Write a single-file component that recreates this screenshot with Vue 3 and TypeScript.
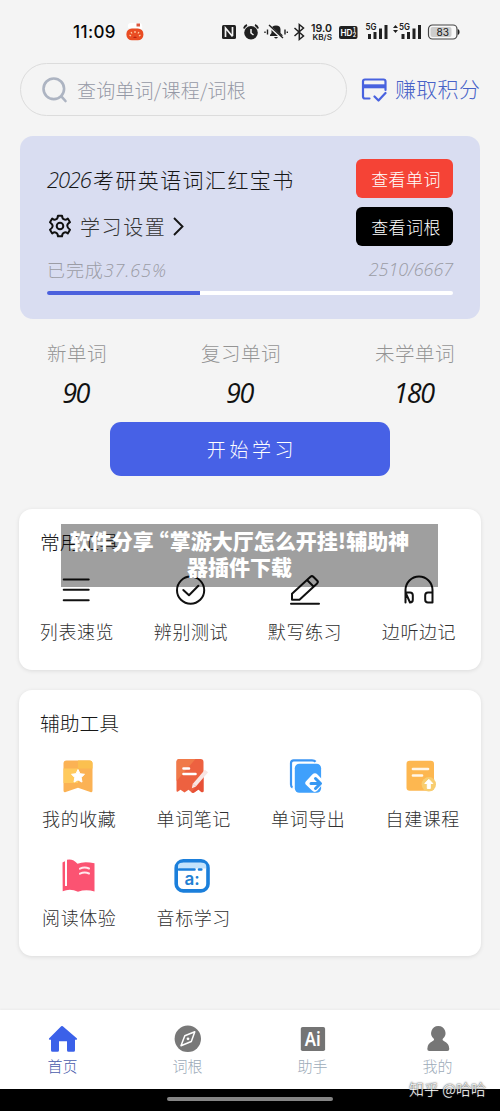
<script setup lang="ts">
interface Item {
  label: string
  icon: string
}

const stats = [
  { label: '新单词', value: '90' },
  { label: '复习单词', value: '90' },
  { label: '未学单词', value: '180' },
]

const progress = 37.65

const common: Item[] = [
  { label: '列表速览', icon: '<path d="M2.7 5.5h25M2.7 15.800h25M2.7 26.300h25" />' },
  { label: '辨别测试', icon: '<circle cx="15.600" cy="16.200" r="13.600"/><path d="m8.300 16 5.700 5.200L23.400 11.700"/>' },
  { label: '默写练习', icon: '<path d="M2 29.800h28M3 25.800v-6L21.500 2.800q1.500-1.300 2.800 0l4 4q1.200 1.300-.2 2.600L10.500 25.800zM18 6l6.300 6.300"/>' },
  { label: '边听边记', icon: '<path d="M2.500 28.500V16a13.500 13.500 0 0 1 27 0v12.500H25q-2.800 0-2.800-2.800v-4.500q0-2.800 2.800-2.800h4.500M2.500 18.400H7q2.800 0 2.800 2.800v4.500q0 2.800-2.800 2.800z"/>' },
]

const helpers: Item[] = [
  {
    label: '我的收藏',
    icon: '<path fill="#fbb254" d="M3.500 4.500q0-3 3-3h23q3 0 3 3v27q0 2.400-2.200 1.400L18 28.800 5.700 33q-2.200.8-2.200-1.400z"/><path fill="#ffca5d" d="M3.500 9.500H18v14.500H3.500z"/><path fill="#fbc04f" d="M18 1.500h11.500q3 0 3 3v5H18z"/><path fill="#fff" stroke="#fff" stroke-linejoin="round" d="m18 10.500 2 4.200 4.500.6-3.300 3.200.8 4.600-4-2.200-4 2.200.8-4.600-3.300-3.200 4.500-.6z"/>',
  },
  {
    label: '单词笔记',
    icon: '<path fill="#ed6140" d="M2.500 3q0-3 3-3h21q3 0 3 3v29.500q-1.500 1.500-3-.2l-2-1.800-4 2.700q-1.500 1-3 0l-3-2.400-4 2.700-4-2.700-2.500 1.700q-1.500.8-1.500-1z"/><path fill="#f07a49" d="M2.500 3q0-3 3-3h16l-19 22z"/><path fill="#e75036" d="M29.500 18v14.500q-1.500 1.500-3-.2l-2-1.800-4 2.700q-1.500 1-3 0z"/><path stroke="#fff" stroke-width="2.600" stroke-linecap="round" d="M9.500 9.500H15M9.500 15h12"/><path stroke="#f8e5e3" stroke-width="4.200" d="M32.500 12 20.500 26"/><path fill="#f8e5e3" d="m18.800 24.500 3.300 2.900-4.300 1.800z"/>',
  },
  {
    label: '单词导出',
    icon: '<path fill="none" stroke="#3b95f3" stroke-width="2.200" d="M3.500 28.500Q2 28 2 25.500V4q0-2.700 2.700-2.700H23q2.500 0 3.600 1.400"/><rect x="5.800" y="4.700" width="26.300" height="29" rx="4.500" fill="#3fa0fc"/><path fill="#fff" d="m16.800 22.500 6.500-7q2.700-2.500 5.200 0l4.800 5v5l-4.800 6q-2.800 2.800-5.500 0l-6-5.700q-1.500-1.600-.2-3.300z"/><path fill="none" stroke="#3698f3" stroke-width="3" stroke-linecap="round" stroke-linejoin="round" d="M22 24.500h9m-4.500-5 5 5-5 5"/>',
  },
  {
    label: '自建课程',
    icon: '<rect x="3.500" y="1.800" width="27.500" height="30" rx="3.200" fill="#fdb750"/><path stroke="#fff6e8" stroke-width="2.700" stroke-linecap="round" d="M10 10h15M10 16.500h9"/><circle cx="25.800" cy="25.300" r="7.200" fill="#f8cd70"/><path fill="#fff" stroke="#fff" stroke-linejoin="round" d="m25.800 20.300 4 4.200h-2.500v5h-3v-5h-2.500z"/>',
  },
  {
    label: '阅读体验',
    icon: '<path fill="#fb5372" d="M2.500 3.500q1.500-1 2.500-1.200V27h2V.8Q13-.5 17.500 4.800 24 1.800 34.500 4.300V32.500q-8.500-2.500-16.500.2-8-3.700-15.300-.4z"/><path stroke="#ffe7ec" fill="none" stroke-width="2" stroke-linecap="round" d="M20 9.700q4.500-2.200 9-.2M20 14.700q4.500-2.200 9-.2"/>',
  },
  {
    label: '音标学习',
    icon: '<rect x="2.200" y="1.900" width="31.800" height="30" rx="7" fill="#fff" stroke="#1b7fdb" stroke-width="3.600"/><path fill="#c3e3fc" d="M4 9.500V7.200q0-3.500 4-3.500h20.200q4 0 4 3.500v2.300z"/><path stroke="#1b7fdb" stroke-width="2.600" stroke-linecap="round" d="M5 10.500h15.500M25 10.500h2.300"/><text x="10.500" y="25.500" font-family="Inter" font-weight="600" font-size="17" fill="#2280d3">a:</text>',
  },
]

const tabs: Item[] = [
  { label: '首页', icon: '<path fill="#3b61e9" d="M14.800 1.300 29 13.500q.6 1.300-1 1.300h-1v10.500q0 1.500-1.500 1.500h-5q-1.500 0-1.500-1.500v-9h-8v9q0 1.500-1.500 1.500h-5Q3 26.800 3 25.300V14.800H2q-1.600 0-1-1.300L13.200 1.300q.8-.7 1.600 0z"/>' },
  { label: '词根', icon: '<circle cx="14.800" cy="13.800" r="13.200" fill="#787878"/><path d="M21.800 6.800 18.300 16.500 8 20.800 11.800 10.800z" fill="none" stroke="#fff" stroke-width="1.500" stroke-linejoin="round"/><circle cx="15" cy="13.800" r="1.400" fill="#fff"/>' },
  { label: '助手', icon: '<rect x="2.800" y="2" width="24.300" height="24" rx="1.800" fill="#747474"/><text x="6.800" y="21" font-family="Noto Sans" font-weight="600" font-size="19" textLength="16" lengthAdjust="spacingAndGlyphs" fill="#fff">Ai</text>' },
  { label: '我的', icon: '<path fill="#767676" d="M15.300 1a7.200 7.200 0 0 1 4.500 12.800q-1 1.500 1 2.300Q26.300 18.500 26.300 24q0 2-2 2h-18q-2 0-2-2 0-5.500 5.500-7.900 2-.8 1-2.300A7.200 7.200 0 0 1 15.300 1z"/>' },
]
</script>

<template>
  <div class="screen">
    <header class="status">
      <span class="clock">11:09</span>
      <svg class="tomato" viewBox="0 0 18 18"><path d="M2 5Q1 0 5 0h9q3 1 2 6z" fill="#fff" /><rect x=".4" y="5.500" width="17" height="11.800" rx="5.500" fill="#e94c23" /><path d="m5 13-1.500-1M6 10.500 5 9M9 10V8M12 10.500l1-1.500M13 13l1.500-1" stroke="#ffd3a9" stroke-width="1.200" /><path d="M7 15q2-3 4 0z" fill="#b92213" /><path d="M10.500.5h3.500v3h-3.500z" fill="#dc5940" /></svg>
      <svg class="indicators" viewBox="0 0 245 24" fill="#202020">
        <rect x="2" y="5" width="14" height="14" rx="1.500" />
        <path d="M5.500 17V8l7 8.500M12.500 7v9" fill="none" stroke="#f4f4f4" stroke-width="1.700" />
        <circle cx="31" cy="12.800" r="6.800" /><path d="M24 8.500q.5-2.500 3-3.500M38 8.500q-.5-2.500-3-3.500" fill="none" stroke="#202020" stroke-width="2" /><path d="M31 9v4l2.500 2" fill="none" stroke="#f4f4f4" stroke-width="1.500" />
        <path d="M50 16v-1l1.500-2V9.500q0-4 4.500-4t4.500 4V13l2 2v1zM54 17h4q-2 3-4 0z" /><path d="m48.500 5.500 14 13" stroke="#f4f4f4" stroke-width="2.500" /><path d="m49 5 14 13M47.500 9.500v5M45 11.500v1.500M65 9.500v5M67.300 11.500v1.500" stroke="#202020" stroke-width="1.400" />
        <path d="m74.500 8 9 8-4.200 3.500V4.500l4.200 3.500-9 8" fill="none" stroke="#202020" stroke-width="1.500" />
        <g font-family="Inter, sans-serif" font-weight="600"><text x="91" y="12" font-size="10.500" textLength="21" lengthAdjust="spacingAndGlyphs">19.0</text><text x="92.500" y="20" font-size="7.500" textLength="19.500" lengthAdjust="spacingAndGlyphs">KB/S</text>
          <text x="145.500" y="10" font-size="9" textLength="11" lengthAdjust="spacingAndGlyphs">5G</text><text x="179" y="10" font-size="9" textLength="11" lengthAdjust="spacingAndGlyphs">5G</text>
        </g>
        <rect x="119" y="6" width="18.500" height="13" rx="2" />
        <g font-family="Inter, sans-serif" font-weight="600" fill="#fff"><text x="120.500" y="16" font-size="9.500" textLength="12" lengthAdjust="spacingAndGlyphs">HD</text><text x="133" y="11.500" font-size="5.500">1</text><text x="132.800" y="17" font-size="5.500">2</text></g>
        <path d="M148 14h3v5h-3zM153.500 12h3v7h-3zM159 8.500h3V19h-3zM164.500 5h3v14h-3zM181.500 14h3v5h-3zM187 12h3v7h-3zM192.500 8.500h3V19h-3zM198 5h3v14h-3zM173 8l2.500-3 2.500 3zM173 10l2.500 3 2.500-3z" />
        <rect x="208.500" y="5" width="28.500" height="14" rx="4" fill="#f8f8f8" stroke="#444" stroke-width="1.200" /><rect x="210.500" y="7" width="21" height="10" rx="2" fill="#cdcdcd" /><path d="M237.800 9v6q1.800-.5 1.800-3t-1.800-3z" /><text x="216.500" y="16" font-family="Inter, sans-serif" font-weight="400" font-size="10.500" textLength="12.500" lengthAdjust="spacingAndGlyphs">83</text>
      </svg>
    </header>

    <div class="top">
      <div class="search">
        <svg viewBox="0 0 26 26" fill="none" stroke="#adb4c2" stroke-width="2.600" stroke-linecap="round"><circle cx="11.800" cy="11.800" r="10.300" /><path d="m19.300 19.300 4.200 4.700" /></svg>
        <span>查询单词/课程/词根</span>
      </div>
      <div class="earn">
        <svg viewBox="0 0 26 24" fill="none" stroke="#4862df" stroke-width="2.200" stroke-linecap="round" stroke-linejoin="round"><path d="M8.500 20.500H4q-2 0-2-2v-15q0-2 2-2h18.500q2 0 2 2V12M13.500 18.500l4 4 7-7.500" /><path d="M2 8.300h22.500" stroke-width="4" stroke-linecap="butt" /></svg>
        <span>赚取积分</span>
      </div>
    </div>

    <section class="book">
      <div class="book-main">
        <div class="book-info">
          <h1><i>2026</i>考研英语词汇红宝书</h1>
          <div class="settings">
            <svg class="gear" viewBox="0 0 24 24" fill="none" stroke="#111" stroke-width="2" stroke-linejoin="round"><path d="M10 1.700h4q.3 3.600 2.600 3.900 1.500.2 3.200-1l2.200 3.600q-3.200 2-2.700 3.800.1 1.800 2.700 3.800l-2.200 3.600q-1.700-1.200-3.200-1-2.300.3-2.600 3.900h-4q-.3-3.600-2.600-3.900-1.500-.2-3.200 1L2 15.800q2.600-2 2.700-3.800Q4.600 10.200 2 8.200l2.200-3.600q1.700 1.200 3.200 1Q9.700 5.300 10 1.700z" /><circle cx="12" cy="12" r="3.300" /></svg>
            <span>学习设置</span>
            <svg class="chevron" viewBox="0 0 11 19" fill="none" stroke="#151515" stroke-width="1.900"><path d="m1 1 8.500 8.500L1 18" /></svg>
          </div>
        </div>
        <div class="actions"><button class="red">查看单词</button><button class="black">查看词根</button></div>
      </div>
      <div class="done"><span>已完成<i>{{ progress }}%</i></span><i class="total">2510/6667</i></div>
      <div class="track"><div class="bar" :style="{ width: progress + '%' }"></div></div>
    </section>

    <section class="stats">
      <div v-for="s in stats" :key="s.label" class="stat"><span>{{ s.label }}</span><strong>{{ s.value }}</strong></div>
    </section>
    <button class="start">开始学习</button>

    <section class="panel common">
      <h2>常用工具</h2>
      <div class="tools">
        <div v-for="t in common" :key="t.label" class="tool"><svg viewBox="0 0 32 32" fill="none" stroke="#111" stroke-width="2" stroke-linecap="round" stroke-linejoin="round" v-html="t.icon"></svg><span>{{ t.label }}</span></div>
      </div>
      <div class="notice">软件分享<span class="quote">“</span>掌游大厅怎么开挂!辅助神<br />器插件下载</div>
    </section>

    <section class="panel helpers">
      <h2>辅助工具</h2>
      <div class="tools">
        <div v-for="t in helpers" :key="t.label" class="tool"><svg viewBox="0 0 36 34" v-html="t.icon"></svg><span>{{ t.label }}</span></div>
      </div>
    </section>

    <nav class="tabs">
      <div v-for="(t, i) in tabs" :key="t.label" class="tab" :class="{ active: i === 0 }"><svg viewBox="0 0 30 28" v-html="t.icon"></svg><span>{{ t.label }}</span></div>
    </nav>
    <footer class="system"><div class="handle"></div><span class="credit">知乎 @哈哈</span></footer>
  </div>
</template>

<style>
body { margin: 0; background: #f4f4f4; }
</style>

<style scoped>
* { box-sizing: border-box; }
.screen {
  position: relative; display: flex; flex-direction: column; width: 500px; height: 1111px;
  overflow: hidden; background: #f4f4f4; white-space: nowrap; color: #171717;
  font-family: "Noto Sans CJK SC", sans-serif; font-weight: 300;
}
svg { display: block; flex: none; }
button { border: 0; padding: 0; font: inherit; color: #fff; }
h1, h2 { margin: 0; font-weight: 300; }
i, .stat strong { font-family: "Open Sans", "Noto Sans", sans-serif; font-style: italic; }
.status { display: flex; height: 63px; padding: 20px 0 0 73px; }
.clock { width: 53px; font: 500 17px/24px Inter, sans-serif; letter-spacing: .4px; color: #080808; }
.tomato { width: 18px; height: 18px; margin-top: 3px; }
.indicators { width: 245px; height: 24px; margin-left: 76px; }

.top { display: flex; height: 53px; padding-left: 20px; }
.search { display: flex; align-items: center; width: 327px; border: 1px solid #dcdcdc; border-radius: 27px; padding-left: 21px; }
.search svg { width: 26px; height: 26px; }
.search span { margin-left: 9px; font-size: 19px; letter-spacing: .2px; color: #9498a5; }
.earn { display: flex; align-items: center; margin-left: 14px; color: #4862c8; }
.earn svg { width: 26px; height: 24px; }
.earn span { margin: -3px 0 0 8px; font-size: 21px; letter-spacing: .3px; }

.book { width: 460px; height: 183px; margin: 20px 0 0 20px; padding: 23px 27px 0; border-radius: 13px; background: #d9ddf1; }
.book-main { display: flex; justify-content: space-between; height: 87px; }
.book h1 { height: 43px; font-size: 21px; line-height: 41px; letter-spacing: 1.400px; }
.book h1 i { display: inline-block; width: 46px; font-size: 22px; letter-spacing: -1.200px; }
.settings { display: flex; align-items: center; height: 48px; margin-left: 1px; }
.gear { width: 24px; height: 24px; }
.settings span { margin-left: 8px; font-size: 20px; letter-spacing: 1.600px; color: #333; }
.chevron { width: 11px; height: 19px; margin-left: 7px; }
.actions { display: flex; flex-direction: column; gap: 9px; }
.actions button { width: 97px; height: 39px; padding-left: 3px; border-radius: 6px; font-size: 17px; letter-spacing: .4px; line-height: 39px; }
.red { background: #f54336; }
.black { background: #000; }
.done { display: flex; justify-content: space-between; height: 45px; font-size: 18px; line-height: 46px; letter-spacing: .9px; color: #9b9ca5; }
.done .total { letter-spacing: -.1px; }
.track { height: 4px; border-radius: 2px; background: #fff; }
.bar { height: 4px; border-radius: 2px 0 0 2px; background: #4b60dd; }

.stats { display: flex; justify-content: space-between; height: 103px; padding: 19px 45px 0 47px; }
.stat { display: flex; flex-direction: column; align-items: center; }
.stat span { font-size: 19.500px; line-height: 30px; letter-spacing: .5px; color: #949494; }
.stat strong { margin: 5px 3px 0 0; font-size: 27px; font-weight: 400; line-height: 40px; letter-spacing: -1.500px; color: #111; }
.start { width: 280px; height: 54px; margin-left: 110px; border-radius: 11px; background: #4761e6; font-size: 19px; letter-spacing: 3.600px; padding-left: 4px; line-height: 54px; }

.panel { position: relative; width: 462px; margin-left: 19px; border-radius: 13px; background: #fff; box-shadow: 0 1px 4px rgba(0, 0, 0, .1); }
.panel h2 { padding-left: 21px; font-size: 19.800px; line-height: 30px; }
.common { height: 161px; margin-top: 33px; padding-top: 18px; }
.tools { display: grid; }
.common .tools { grid-template-columns: repeat(4, 114px); margin: 17px 0 0 1px; }
.tool { display: flex; flex-direction: column; align-items: center; color: #303030; }
.common .tool svg { width: 32px; height: 32px; }
.tool span { font-size: 18px; line-height: 28px; letter-spacing: .6px; }
.common .tool span { margin-top: 11px; }
.notice {
  position: absolute; left: 42px; top: 15px; width: 377px; height: 63px; padding: 3px 20px 0 0;
  background: rgba(0, 0, 0, .375); color: #fff; font-size: 21px; font-weight: 900; line-height: 26px; text-align: center;
}
.quote { display: inline-block; width: 16px; text-indent: -7px; }
.helpers { height: 266px; margin-top: 20px; padding-top: 18px; }
.helpers .tools { grid-template-columns: repeat(4, 114.500px); grid-auto-rows: 99px; margin: 21px 0 0 3px; }
.helpers .tool svg { width: 36px; height: 34px; margin-right: 3px; }
.helpers .tool span { margin-top: 11px; }
.helpers .tool:nth-child(n + 5) svg { margin-top: 1px; }
.helpers .tool:nth-child(n + 5) span { margin-top: 10px; }

.tabs { display: grid; grid-template-columns: repeat(4, 125px); height: 79px; margin-top: 54px; padding-top: 15px; background: #fff; box-shadow: 0 -1px 2px rgba(0, 0, 0, .04); }
.tab { display: flex; flex-direction: column; align-items: center; color: #9caab8; }
.tab svg { width: 30px; height: 28px; }
.tab span { margin-top: 2px; font-size: 15px; line-height: 22px; }
.active { color: #4a5cac; }
.system { position: relative; height: 22px; background: #000; }
.handle { width: 166px; height: 4px; margin: 8px auto 0; border-radius: 2px; background: #858585; }
.system { display: flex; }
.credit { position: absolute; left: 409px; top: -13px; font-size: 15px; font-weight: 300; line-height: 26px; color: #fff; text-shadow: 0 0 2px #333, 0 0 1px #555; }
</style>
